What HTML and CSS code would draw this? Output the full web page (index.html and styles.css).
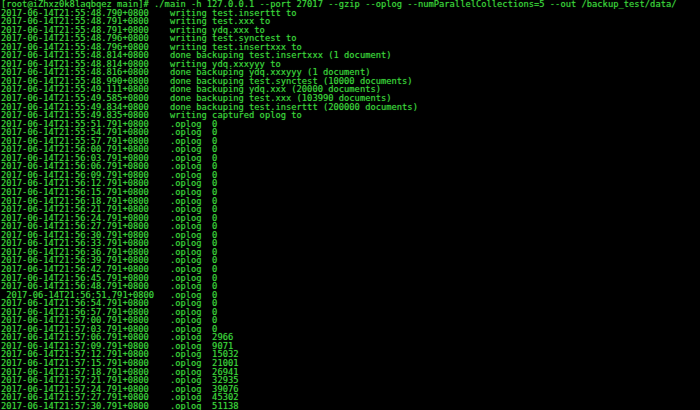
FILE: index.html
```html
<!DOCTYPE html>
<html>
<head>
<meta charset="utf-8">
<link rel="stylesheet" href="styles.css">
</head>
<body>
<pre class="term">[root@iZhxz0k8laqbqez main]# ./main -h 127.0.0.1 --port 27017 --gzip --oplog --numParallelCollections=5 --out /backup_test/data/
2017-06-14T21:55:48.790+0800	writing test.inserttt to
2017-06-14T21:55:48.791+0800	writing test.xxx to
2017-06-14T21:55:48.791+0800	writing ydq.xxx to
2017-06-14T21:55:48.796+0800	writing test.synctest to
2017-06-14T21:55:48.796+0800	writing test.insertxxx to
2017-06-14T21:55:48.814+0800	done backuping test.insertxxx (1 document)
2017-06-14T21:55:48.814+0800	writing ydq.xxxyyy to
2017-06-14T21:55:48.816+0800	done backuping ydq.xxxyyy (1 document)
2017-06-14T21:55:48.990+0800	done backuping test.synctest (10000 documents)
2017-06-14T21:55:49.111+0800	done backuping ydq.xxx (20000 documents)
2017-06-14T21:55:49.585+0800	done backuping test.xxx (103990 documents)
2017-06-14T21:55:49.834+0800	done backuping test.inserttt (200000 documents)
2017-06-14T21:55:49.835+0800	writing captured oplog to
2017-06-14T21:55:51.791+0800	.oplog	0
2017-06-14T21:55:54.791+0800	.oplog	0
2017-06-14T21:55:57.791+0800	.oplog	0
2017-06-14T21:56:00.791+0800	.oplog	0
2017-06-14T21:56:03.791+0800	.oplog	0
2017-06-14T21:56:06.791+0800	.oplog	0
2017-06-14T21:56:09.791+0800	.oplog	0
2017-06-14T21:56:12.791+0800	.oplog	0
2017-06-14T21:56:15.791+0800	.oplog	0
2017-06-14T21:56:18.791+0800	.oplog	0
2017-06-14T21:56:21.791+0800	.oplog	0
2017-06-14T21:56:24.791+0800	.oplog	0
2017-06-14T21:56:27.791+0800	.oplog	0
2017-06-14T21:56:30.791+0800	.oplog	0
2017-06-14T21:56:33.791+0800	.oplog	0
2017-06-14T21:56:36.791+0800	.oplog	0
2017-06-14T21:56:39.791+0800	.oplog	0
2017-06-14T21:56:42.791+0800	.oplog	0
2017-06-14T21:56:45.791+0800	.oplog	0
2017-06-14T21:56:48.791+0800	.oplog	0
 2017-06-14T21:56:51.791+0800	.oplog	0
2017-06-14T21:56:54.791+0800	.oplog	0
2017-06-14T21:56:57.791+0800	.oplog	0
2017-06-14T21:57:00.791+0800	.oplog	0
2017-06-14T21:57:03.791+0800	.oplog	0
2017-06-14T21:57:06.791+0800	.oplog	2966
2017-06-14T21:57:09.791+0800	.oplog	9071
2017-06-14T21:57:12.791+0800	.oplog	15032
2017-06-14T21:57:15.791+0800	.oplog	21001
2017-06-14T21:57:18.791+0800	.oplog	26941
2017-06-14T21:57:21.791+0800	.oplog	32935
2017-06-14T21:57:24.791+0800	.oplog	39076
2017-06-14T21:57:27.791+0800	.oplog	45302
2017-06-14T21:57:30.791+0800	.oplog	51138</pre>
</body>
</html>
```

FILE: styles.css
```css
html, body {
  margin: 0;
  padding: 0;
  background: #000;
  height: 100%;
  overflow: hidden;
}

.term {
  margin: 0;
  padding: 0 0 0 1px;
  font-family: "DejaVu Sans Mono", monospace;
  font-size: 8.77px;
  line-height: 8.55px;
  color: #3ad83a;
  text-shadow: 0 0 1px rgba(58, 216, 58, 0.55);
  white-space: pre;
  tab-size: 8;
  -moz-tab-size: 8;
}
```
